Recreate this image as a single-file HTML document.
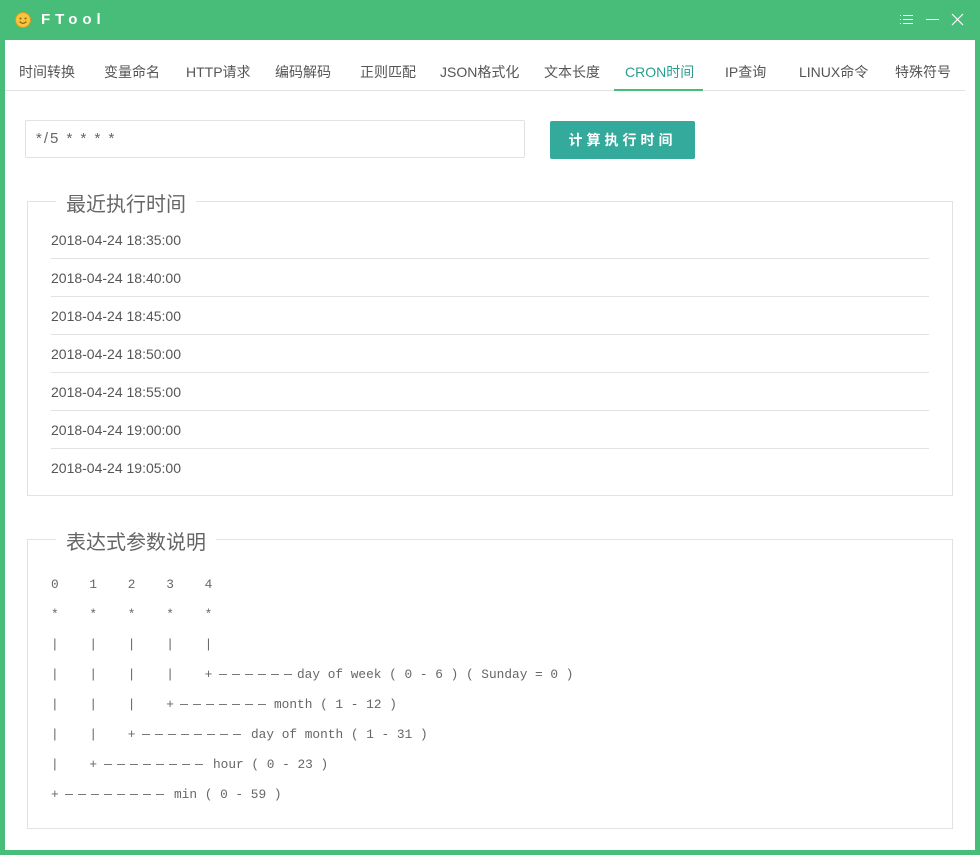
<!DOCTYPE html>
<html><head><meta charset="utf-8"><style>
*{margin:0;padding:0;box-sizing:border-box}
body{width:980px;height:855px;background:#48bd7a;position:relative;overflow:hidden;font-family:"Liberation Sans","Noto Sans CJK SC",sans-serif}
.main{position:absolute;left:5px;top:40px;width:970px;height:810px;background:#fff}
.a{position:absolute;white-space:nowrap}
.tab{position:absolute;top:62px;font-size:14px;color:#555}
.fs{position:absolute;border:1px solid #e2e2e2}
.lg{position:absolute;background:#fff;font-size:20px;color:#666;padding:0 10px}
.row{position:absolute;left:51px;width:878px;height:38px;border-bottom:1px solid #e2e2e2;font-size:14px;color:#555;line-height:38px}
.m{position:absolute;font-family:"Liberation Mono",monospace;font-size:12.8px;color:#666;white-space:pre}
</style></head><body>
<svg class="a" style="left:14px;top:11px" width="18" height="18" viewBox="0 0 18 18"><circle cx="9" cy="9" r="7.5" fill="#f6c640" stroke="#d89a20"/><circle cx="6.5" cy="7.5" r="1" fill="#8a5a10"/><circle cx="11.5" cy="7.5" r="1" fill="#8a5a10"/><path d="M5.5 10.5 Q9 14 12.5 10.5" stroke="#8a5a10" fill="none" stroke-width="1.1"/></svg>
<div class="a" style="left:41px;top:11px;color:#fff;font-size:15px;font-weight:bold;letter-spacing:5px">FTool</div>
<svg class="a" style="left:899px;top:13px" width="16" height="13"><g stroke="#fff" stroke-width="1"><line x1="1" y1="2.5" x2="2" y2="2.5"/><line x1="4" y1="2.5" x2="14" y2="2.5"/><line x1="1" y1="6.5" x2="2" y2="6.5"/><line x1="4" y1="6.5" x2="14" y2="6.5"/><line x1="1" y1="10.5" x2="2" y2="10.5"/><line x1="4" y1="10.5" x2="14" y2="10.5"/></g></svg>
<div class="a" style="left:926px;top:19px;width:13px;height:1px;background:#fff"></div>
<svg class="a" style="left:951px;top:13px" width="13" height="13"><path d="M1 1L12 12M12 1L1 12" stroke="#fff" stroke-width="1.2"/></svg>
<div class="main"></div>
<div class="tab" style="left:19px">时间转换</div>
<div class="tab" style="left:104px">变量命名</div>
<div class="tab" style="left:186px">HTTP请求</div>
<div class="tab" style="left:275px">编码解码</div>
<div class="tab" style="left:360px">正则匹配</div>
<div class="tab" style="left:440px">JSON格式化</div>
<div class="tab" style="left:544px">文本长度</div>
<div class="tab" style="left:625px;color:#2a9d8f">CRON时间</div>
<div class="tab" style="left:725px">IP查询</div>
<div class="tab" style="left:799px">LINUX命令</div>
<div class="tab" style="left:895px">特殊符号</div>
<div class="a" style="left:5px;top:90px;width:960px;height:1px;background:#e2e2e2"></div>
<div class="a" style="left:614px;top:89px;width:89px;height:2px;background:#48bd7a"></div>
<div class="a" style="left:25px;top:120px;width:500px;height:38px;border:1px solid #e2e2e2;border-radius:2px"></div>
<div class="a" style="left:36px;top:130px;font-size:15px;color:#666;letter-spacing:2px">*/5 * * * *</div>
<div class="a" style="left:550px;top:121px;width:145px;height:38px;background:#33aa9c;border-radius:2px;color:#fff;font-size:14px;font-weight:bold;letter-spacing:4px;text-align:center;line-height:38px">计算执行时间</div>
<div class="fs" style="left:27px;top:201px;width:926px;height:295px"></div>
<div class="lg" style="left:56px;top:188px">最近执行时间</div>
<div class="row" style="top:221px">2018-04-24 18:35:00</div>
<div class="row" style="top:259px">2018-04-24 18:40:00</div>
<div class="row" style="top:297px">2018-04-24 18:45:00</div>
<div class="row" style="top:335px">2018-04-24 18:50:00</div>
<div class="row" style="top:373px">2018-04-24 18:55:00</div>
<div class="row" style="top:411px">2018-04-24 19:00:00</div>
<div class="row" style="top:449px;border:none">2018-04-24 19:05:00</div>
<div class="fs" style="left:27px;top:539px;width:926px;height:290px"></div>
<div class="lg" style="left:56px;top:526px">表达式参数说明</div>
<div class="m" style="left:51px;top:577px">0    1    2    3    4</div>
<div class="m" style="left:51px;top:607px">*    *    *    *    *</div>
<div class="m" style="left:51px;top:637px">|    |    |    |    |</div>
<div class="m" style="left:51px;top:667px">|    |    |    |    +</div>
<div class="m" style="left:297px;top:667px">day of week ( 0 - 6 ) ( Sunday = 0 )</div>
<div class="m" style="left:51px;top:697px">|    |    |    +</div>
<div class="m" style="left:274px;top:697px">month ( 1 - 12 )</div>
<div class="m" style="left:51px;top:727px">|    |    +</div>
<div class="m" style="left:251px;top:727px">day of month ( 1 - 31 )</div>
<div class="m" style="left:51px;top:757px">|    +</div>
<div class="m" style="left:213px;top:757px">hour ( 0 - 23 )</div>
<div class="m" style="left:51px;top:787px">+</div>
<div class="m" style="left:174px;top:787px">min ( 0 - 59 )</div>
<svg class="a" style="left:0;top:0" width="980" height="855"><g stroke="#777" stroke-width="1">
<path d="M219 674.5h8M232 674.5h8M245 674.5h8M258 674.5h8M271 674.5h8M284 674.5h8"/>
<path d="M180 704.5h8M193 704.5h8M206 704.5h8M219 704.5h8M232 704.5h8M245 704.5h8M258 704.5h8"/>
<path d="M142 734.5h8M155 734.5h8M168 734.5h8M181 734.5h8M194 734.5h8M207 734.5h8M220 734.5h8M233 734.5h8"/>
<path d="M104 764.5h8M117 764.5h8M130 764.5h8M143 764.5h8M156 764.5h8M169 764.5h8M182 764.5h8M195 764.5h8"/>
<path d="M65 794.5h8M78 794.5h8M91 794.5h8M104 794.5h8M117 794.5h8M130 794.5h8M143 794.5h8M156 794.5h8"/>
</g></svg>
</body></html>
